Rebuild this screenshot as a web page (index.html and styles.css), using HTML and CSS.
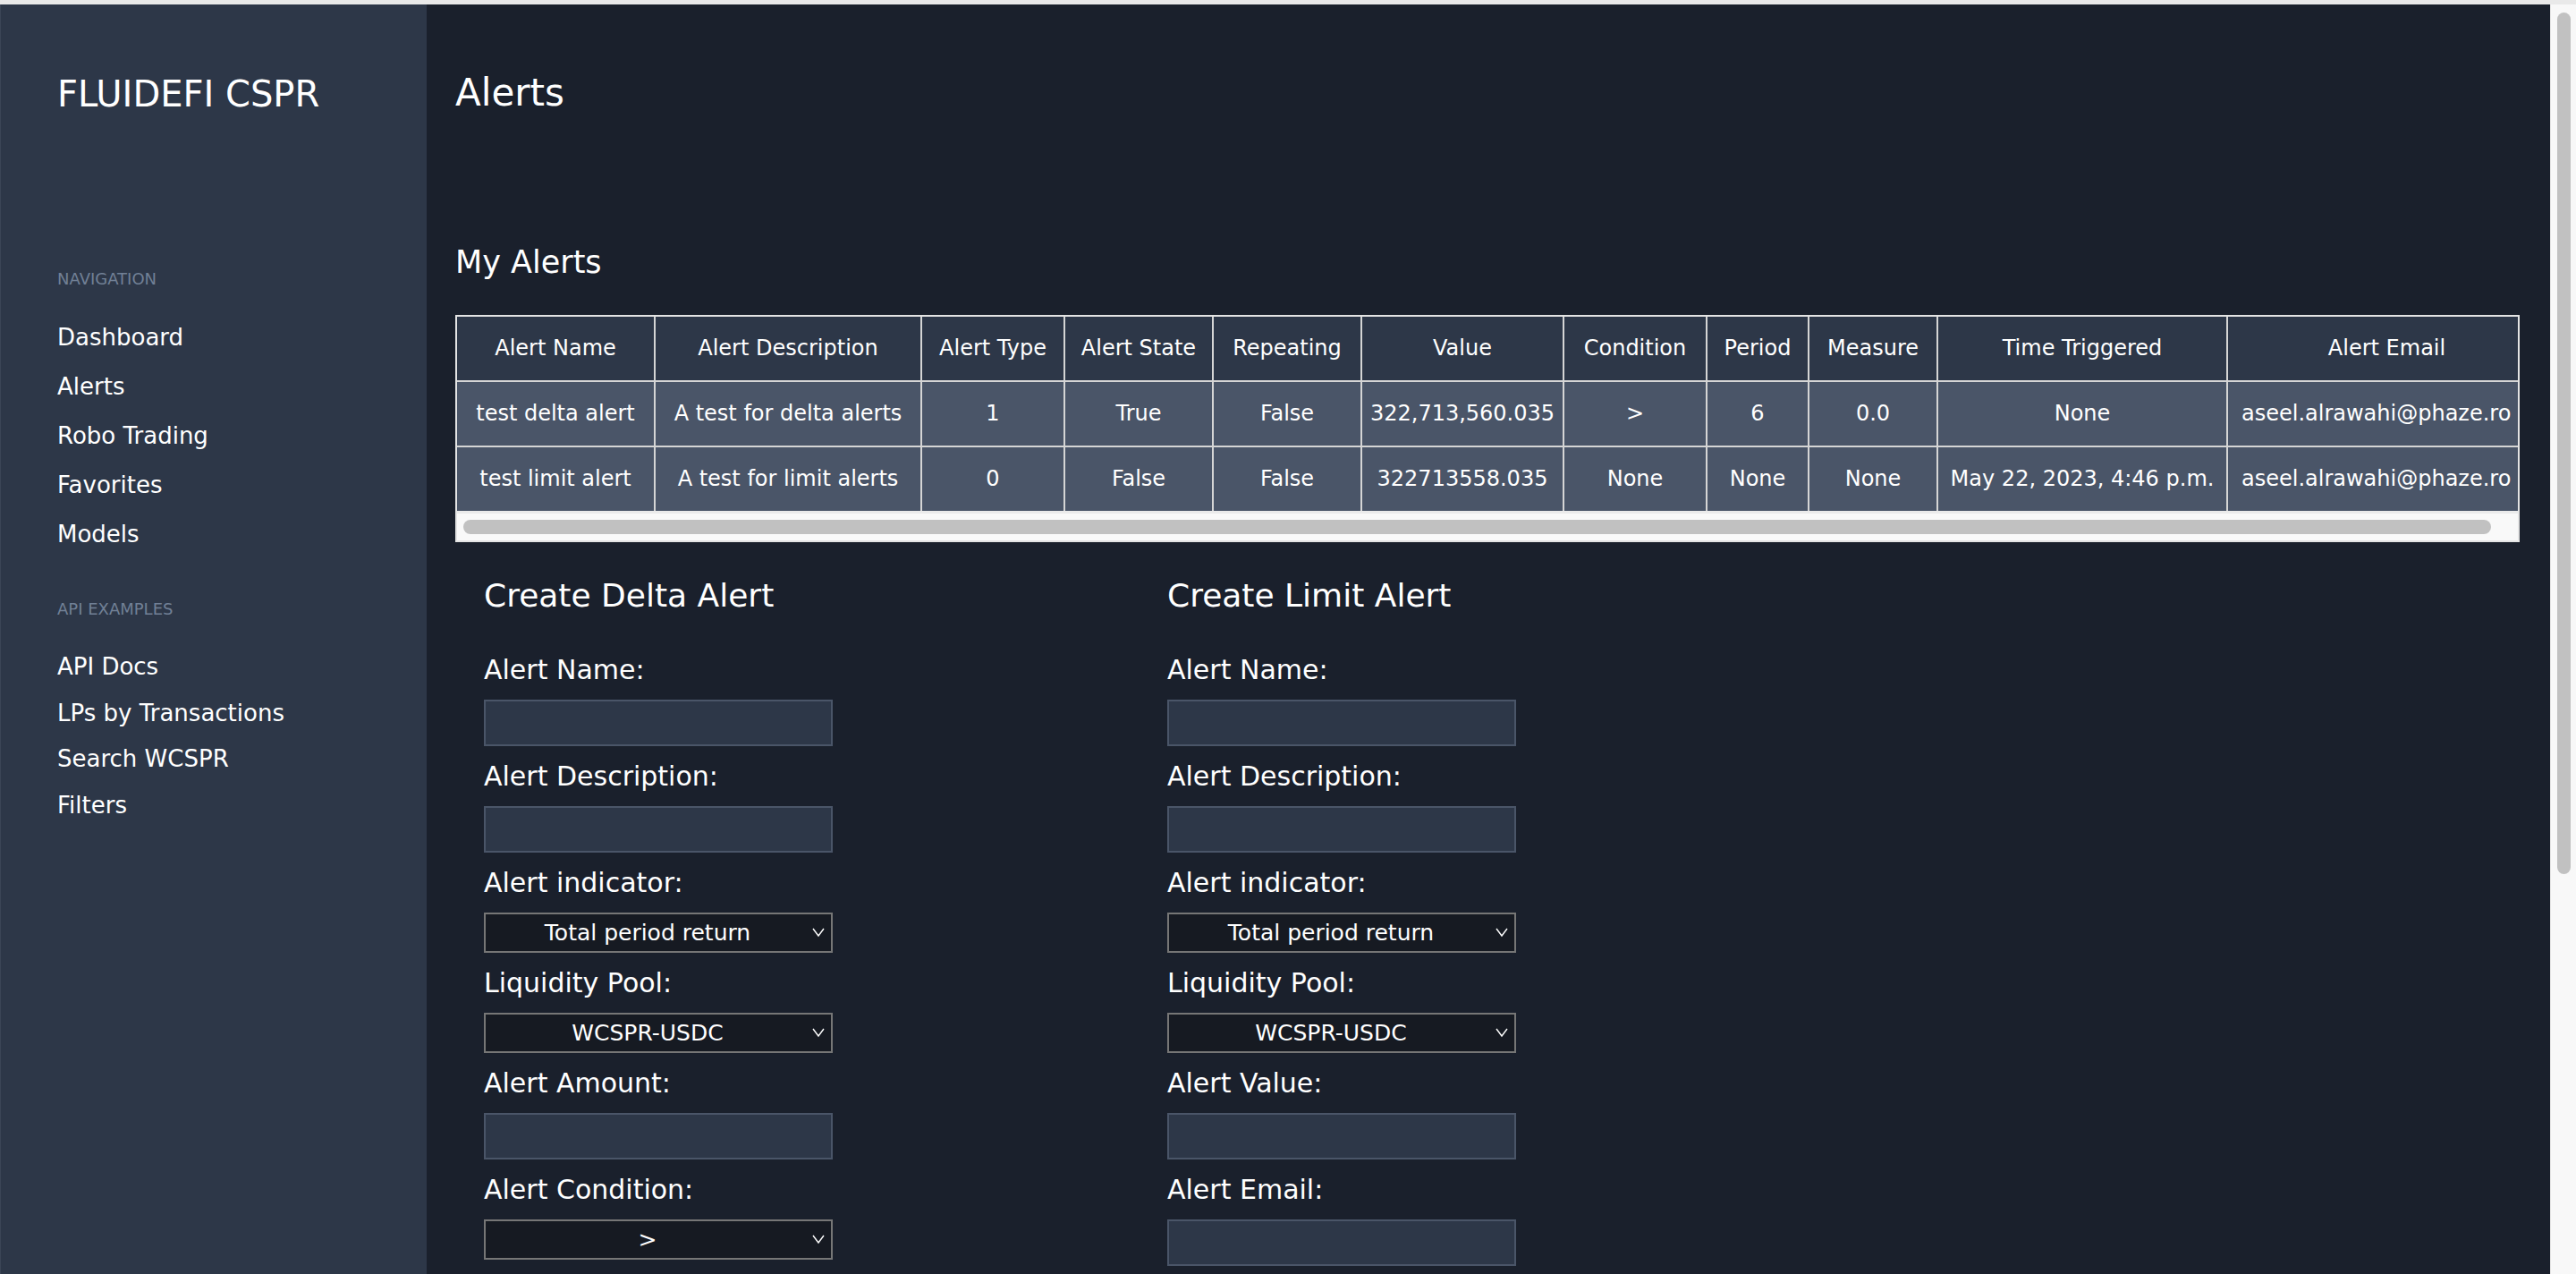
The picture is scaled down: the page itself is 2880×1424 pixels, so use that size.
FILE: index.html
```html
<!DOCTYPE html>
<html lang="en">
<head>
<meta charset="utf-8">
<title>Alerts - FLUIDEFI CSPR</title>
<link rel="stylesheet" href="styles.css">
</head>
<body>
<div class="viewport">
  <div class="page">
    <div class="app">
      <aside class="sidebar">
        <div class="brand">FLUIDEFI CSPR</div>
        <div class="nav-heading nav-heading--first">NAVIGATION</div>
        <ul class="nav-list nav-list--main">
          <li><a class="nav-link" href="#">Dashboard</a></li>
          <li><a class="nav-link" href="#">Alerts</a></li>
          <li><a class="nav-link" href="#">Robo Trading</a></li>
          <li><a class="nav-link" href="#">Favorites</a></li>
          <li><a class="nav-link" href="#">Models</a></li>
        </ul>
        <div class="nav-heading">API EXAMPLES</div>
        <ul class="nav-list nav-list--api">
          <li><a class="nav-link" href="#">API Docs</a></li>
          <li><a class="nav-link" href="#">LPs by Transactions</a></li>
          <li><a class="nav-link" href="#">Search WCSPR</a></li>
          <li><a class="nav-link" href="#">Filters</a></li>
        </ul>
      </aside>

      <main class="main">
        <h1 class="page-title">Alerts</h1>
        <h2 class="section-title">My Alerts</h2>

        <div class="table-panel">
          <div class="table-clip">
            <table class="alerts-table">
              <colgroup>
                <col class="c-name"><col class="c-desc"><col class="c-type"><col class="c-state"><col class="c-rep"><col class="c-value"><col class="c-cond"><col class="c-period"><col class="c-measure"><col class="c-time"><col class="c-email">
              </colgroup>
              <thead>
                <tr>
                  <th>Alert Name</th><th>Alert Description</th><th>Alert Type</th><th>Alert State</th><th>Repeating</th><th>Value</th><th>Condition</th><th>Period</th><th>Measure</th><th>Time Triggered</th><th>Alert Email</th>
                </tr>
              </thead>
              <tbody>
                <tr>
                  <td>test delta alert</td><td>A test for delta alerts</td><td>1</td><td>True</td><td>False</td><td>322,713,560.035</td><td>&gt;</td><td>6</td><td>0.0</td><td>None</td><td class="cell-email">aseel.alrawahi@phaze.ro</td>
                </tr>
                <tr>
                  <td>test limit alert</td><td>A test for limit alerts</td><td>0</td><td>False</td><td>False</td><td>322713558.035</td><td>None</td><td>None</td><td>None</td><td>May 22, 2023, 4:46 p.m.</td><td class="cell-email">aseel.alrawahi@phaze.ro</td>
                </tr>
              </tbody>
            </table>
          </div>
          <div class="hscroll" aria-hidden="true"><div class="hscroll-thumb"></div></div>
        </div>

        <div class="forms">
          <form class="alert-form">
            <h3 class="form-title">Create Delta Alert</h3>
            <label class="field-label" for="d-name">Alert Name:</label>
            <input class="field-input" id="d-name" type="text">
            <label class="field-label" for="d-desc">Alert Description:</label>
            <input class="field-input" id="d-desc" type="text">
            <label class="field-label" for="d-ind">Alert indicator:</label>
            <div class="select-wrap">
              <select class="field-select" id="d-ind"><option>Total period return</option></select>
              <svg class="select-arrow" viewBox="0 0 14 12"><polyline points="1,2 7,10 13,2" fill="none" stroke="#fff" stroke-width="1.4"/></svg>
            </div>
            <label class="field-label" for="d-pool">Liquidity Pool:</label>
            <div class="select-wrap">
              <select class="field-select" id="d-pool"><option>WCSPR-USDC</option></select>
              <svg class="select-arrow" viewBox="0 0 14 12"><polyline points="1,2 7,10 13,2" fill="none" stroke="#fff" stroke-width="1.4"/></svg>
            </div>
            <label class="field-label" for="d-amount">Alert Amount:</label>
            <input class="field-input" id="d-amount" type="text">
            <label class="field-label" for="d-cond">Alert Condition:</label>
            <div class="select-wrap">
              <select class="field-select" id="d-cond"><option>&gt;</option><option>&lt;</option></select>
              <svg class="select-arrow" viewBox="0 0 14 12"><polyline points="1,2 7,10 13,2" fill="none" stroke="#fff" stroke-width="1.4"/></svg>
            </div>
          </form>

          <form class="alert-form">
            <h3 class="form-title">Create Limit Alert</h3>
            <label class="field-label" for="l-name">Alert Name:</label>
            <input class="field-input" id="l-name" type="text">
            <label class="field-label" for="l-desc">Alert Description:</label>
            <input class="field-input" id="l-desc" type="text">
            <label class="field-label" for="l-ind">Alert indicator:</label>
            <div class="select-wrap">
              <select class="field-select" id="l-ind"><option>Total period return</option></select>
              <svg class="select-arrow" viewBox="0 0 14 12"><polyline points="1,2 7,10 13,2" fill="none" stroke="#fff" stroke-width="1.4"/></svg>
            </div>
            <label class="field-label" for="l-pool">Liquidity Pool:</label>
            <div class="select-wrap">
              <select class="field-select" id="l-pool"><option>WCSPR-USDC</option></select>
              <svg class="select-arrow" viewBox="0 0 14 12"><polyline points="1,2 7,10 13,2" fill="none" stroke="#fff" stroke-width="1.4"/></svg>
            </div>
            <label class="field-label" for="l-value">Alert Value:</label>
            <input class="field-input" id="l-value" type="text">
            <label class="field-label" for="l-email">Alert Email:</label>
            <input class="field-input" id="l-email" type="text">
          </form>
        </div>
      </main>
    </div>
  </div>
  <div class="vscroll" aria-hidden="true"><div class="vscroll-thumb"></div></div>
</div>
</body>
</html>
```

FILE: styles.css
```css
html, body {
  margin: 0;
  padding: 0;
}

body {
  padding-top: 5px;
  background: #e9e9e9;
  font-family: "DejaVu Sans", "Noto Sans", sans-serif;
  color: #ffffff;
}

.viewport {
  display: flex;
  height: calc(100vh - 5px);
}

.page {
  flex: 1;
  min-width: 0;
  overflow: hidden;
  background: #1a202c;
}

.app {
  display: flex;
  min-height: 100%;
}

/* Page scrollbar (decorative) */
.vscroll {
  width: 29px;
  flex-shrink: 0;
  box-sizing: border-box;
  padding: 9px 6px 0 7px;
  background: #f8f8f8;
  border-left: 1px solid #e4e4e4;
}

.vscroll-thumb {
  height: 963px;
  border-radius: 8px;
  background: #c1c1c1;
}

/* Sidebar */
.sidebar {
  width: 477px;
  flex-shrink: 0;
  box-sizing: border-box;
  background: #2d3748;
  padding: 76px 0 0 64px;
  box-shadow: inset 1px 0 #3b4556;
}

.brand {
  font-size: 40px;
  line-height: 48px;
  white-space: nowrap;
}

.nav-heading {
  margin-top: 42px;
  font-size: 18px;
  line-height: 27px;
  color: #718096;
}

.nav-heading--first {
  margin-top: 169px;
}

.nav-list {
  list-style: none;
  margin: 25px 0 0;
  padding: 0;
  font-size: 26px;
}

.nav-list--main li {
  line-height: 55px;
}

.nav-list--api {
  margin-top: 26px;
}

.nav-list--api li {
  line-height: 51.5px;
}

.nav-link {
  color: #ffffff;
  text-decoration: none;
  white-space: nowrap;
}

/* Main */
.main {
  flex: 1;
  min-width: 0;
  padding: 74px 34px 0 32px;
}

.page-title {
  margin: 0;
  font-size: 42px;
  line-height: 50px;
  font-weight: normal;
}

.section-title {
  margin: 143px 0 0;
  font-size: 35px;
  line-height: 42px;
  font-weight: normal;
}

/* Table */
.table-panel {
  margin-top: 38px;
  border: 2px solid #e4e4e4;
  background: #f9f9f9;
}

.table-clip {
  overflow: hidden;
}

.hscroll {
  height: 33px;
  box-sizing: border-box;
  padding: 10px 7px 7px;
  background: linear-gradient(#ebebeb 0 3px, #f9f9f9 3px);
}

.hscroll-thumb {
  width: 99%;
  height: 16px;
  border-radius: 8px;
  background: #c1c1c1;
}

.alerts-table {
  width: 2335px;
  table-layout: fixed;
  border-collapse: collapse;
  border-style: hidden;
  font-size: 24px;
}

.alerts-table th,
.alerts-table td {
  border: 2px solid #d5d5d5;
  padding: 18px 6px;
  line-height: 35px;
  text-align: center;
  white-space: nowrap;
  overflow: hidden;
  font-weight: normal;
  color: #ffffff;
}

.alerts-table th {
  background: #2d3748;
}

.alerts-table td {
  background: #4a5568;
}

.alerts-table td.cell-email {
  text-align: left;
  padding-left: 15px;
}

.c-name { width: 221px; }
.c-desc { width: 298px; }
.c-type { width: 160px; }
.c-state { width: 166px; }
.c-rep { width: 166px; }
.c-value { width: 226px; }
.c-cond { width: 160px; }
.c-period { width: 114px; }
.c-measure { width: 144px; }
.c-time { width: 324px; }
.c-email { width: 356px; }

/* Forms */
.forms {
  display: flex;
  gap: 374px;
  margin-top: 38px;
  padding-left: 32px;
}

.alert-form {
  width: 390px;
  display: flex;
  flex-direction: column;
  gap: 11px;
}

.form-title {
  margin: 0 0 28px;
  font-size: 36px;
  line-height: 43px;
  font-weight: normal;
  white-space: nowrap;
}

.field-label {
  font-size: 30px;
  line-height: 45px;
  white-space: nowrap;
}

.field-input {
  box-sizing: border-box;
  width: 390px;
  height: 52px;
  margin: 0;
  padding: 0 10px;
  background: #2d3748;
  border: 2px solid #4a5568;
  border-radius: 0;
  color: #ffffff;
  font-family: inherit;
  font-size: 24px;
  outline: none;
}

.select-wrap {
  position: relative;
  width: 390px;
  height: 45px;
}

.field-select {
  -webkit-appearance: none;
  appearance: none;
  box-sizing: border-box;
  width: 390px;
  height: 45px;
  margin: 0;
  padding: 0 28px 0 4px;
  background: #161a22;
  border: 2px solid #767676;
  border-radius: 0;
  color: #ffffff;
  font-family: inherit;
  font-size: 25px;
  text-align: center;
  text-align-last: center;
  outline: none;
}

.select-arrow {
  position: absolute;
  right: 9px;
  top: 16px;
  width: 14px;
  height: 12px;
  pointer-events: none;
}
```
